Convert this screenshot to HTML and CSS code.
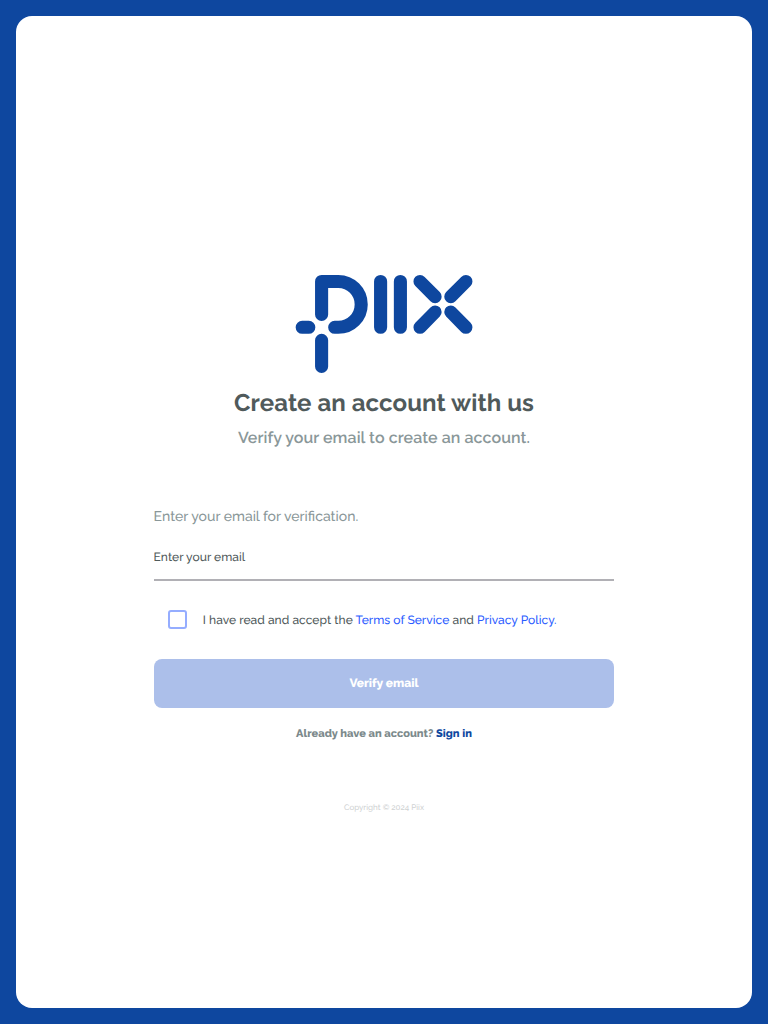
FILE: index.html
```html
<!DOCTYPE html>
<html lang="en">
<head>
<meta charset="utf-8">
<title>Create an account</title>
<link rel="stylesheet" href="styles.css">
</head>
<body>
<main class="card">
  <svg class="logo" viewBox="295 274 178 100" role="img" aria-label="Piix">
    <path d="M321.6 314.4V281.5H338.3a22.9 22.9 0 0 1 0 45.8H334.7M302.2 327.3h6.6M321.6 340.3v26.1M380.6 281.5v45.8M400.4 281.5v45.8M420 281.5l15.1 15.2M450.8 296.7l15.1-15.2M435.1 312l-15.1 15.3M450.8 312l15.1 15.3"/>
  </svg>
  <h1 class="title">Create an account with us</h1>
  <p class="subtitle">Verify your email to create an account.</p>
  <form class="form">
    <label class="hint" for="email">Enter your email for verification.</label>
    <input class="email" id="email" type="email" placeholder="Enter your email">
    <div class="terms">
      <input class="check" type="checkbox" aria-label="Accept terms">
      <span class="terms-text">I have read and accept the <a href="#">Terms of Service</a> and <a href="#">Privacy Policy.</a></span>
    </div>
    <button class="submit" type="button">Verify email</button>
  </form>
  <p class="signin">Already have an account? <a href="#">Sign in</a></p>
  <footer class="copyright">Copyright © 2024 Piix</footer>
</main>
</body>
</html>
```
FILE: styles.css
```css
* { box-sizing: border-box; }
body {
  margin: 0;
  height: 1024px;
  padding: 16px;
  background: #0e479f;
  font-family: Raleway, Lato, sans-serif;
  text-rendering: geometricPrecision;
  color: #505a5b;
}
.card {
  height: 992px;
  padding-top: 258px;
  border-radius: 16px;
  background: #fff;
  display: flex;
  flex-direction: column;
  align-items: center;
}
.logo {
  width: 178px;
  height: 100px;
  flex: none;
  fill: none;
  stroke: #0e479f;
  stroke-width: 13.1;
  stroke-linecap: round;
  stroke-linejoin: round;
}
.title {
  margin: 13px 0 0;
  font-size: 24px;
  line-height: 32px;
  font-weight: 700;
  letter-spacing: .08px;
  white-space: nowrap;
}
.subtitle {
  margin: 7px 0 0;
  font-size: 16px;
  line-height: 24px;
  font-weight: 600;
  letter-spacing: .08px;
  color: #8a9799;
}
.form {
  width: 460.8px;
  margin-top: 57px;
  display: flex;
  flex-direction: column;
}
.hint {
  font-size: 14px;
  line-height: 20px;
  font-weight: 500;
  color: #8a9799;
}
.email {
  height: 48px;
  margin-top: 6px;
  padding: 1px 0 0;
  border: 0;
  border-bottom: 2px solid #b1b0b5;
  background: none;
  font: 500 12px/16px Raleway, Lato, sans-serif;
  letter-spacing: .04px;
  text-rendering: inherit;
}
.email::placeholder { color: #505a5b; opacity: 1; }
.terms {
  display: flex;
  align-items: center;
  height: 19px;
  margin-top: 29px;
  padding-left: 14.2px;
  gap: 16px;
}
.check {
  appearance: none;
  width: 19px;
  height: 19px;
  margin: 0;
  border: 2px solid #95adff;
  border-radius: 3px;
}
.terms-text {
  font-size: 12px;
  line-height: 16px;
  font-weight: 500;
  letter-spacing: .045px;
  white-space: nowrap;
}
a { color: #2b5cff; text-decoration: none; }
.submit {
  height: 49px;
  margin-top: 30px;
  padding: 0 0 2px;
  border: 0;
  border-radius: 8px;
  background: #acbfea;
  color: #fff;
  font: 800 12px/16px Raleway, Lato, sans-serif;
  text-rendering: inherit;
}
.signin {
  margin: 18px 0 0;
  font-size: 11px;
  line-height: 16px;
  font-weight: 800;
  letter-spacing: .02px;
  color: #7c8a8c;
}
.signin a { color: #0e479f; }
.copyright {
  margin-top: 59px;
  font-size: 8px;
  line-height: 12px;
  font-weight: 500;
  color: #cfd2d3;
}
```
